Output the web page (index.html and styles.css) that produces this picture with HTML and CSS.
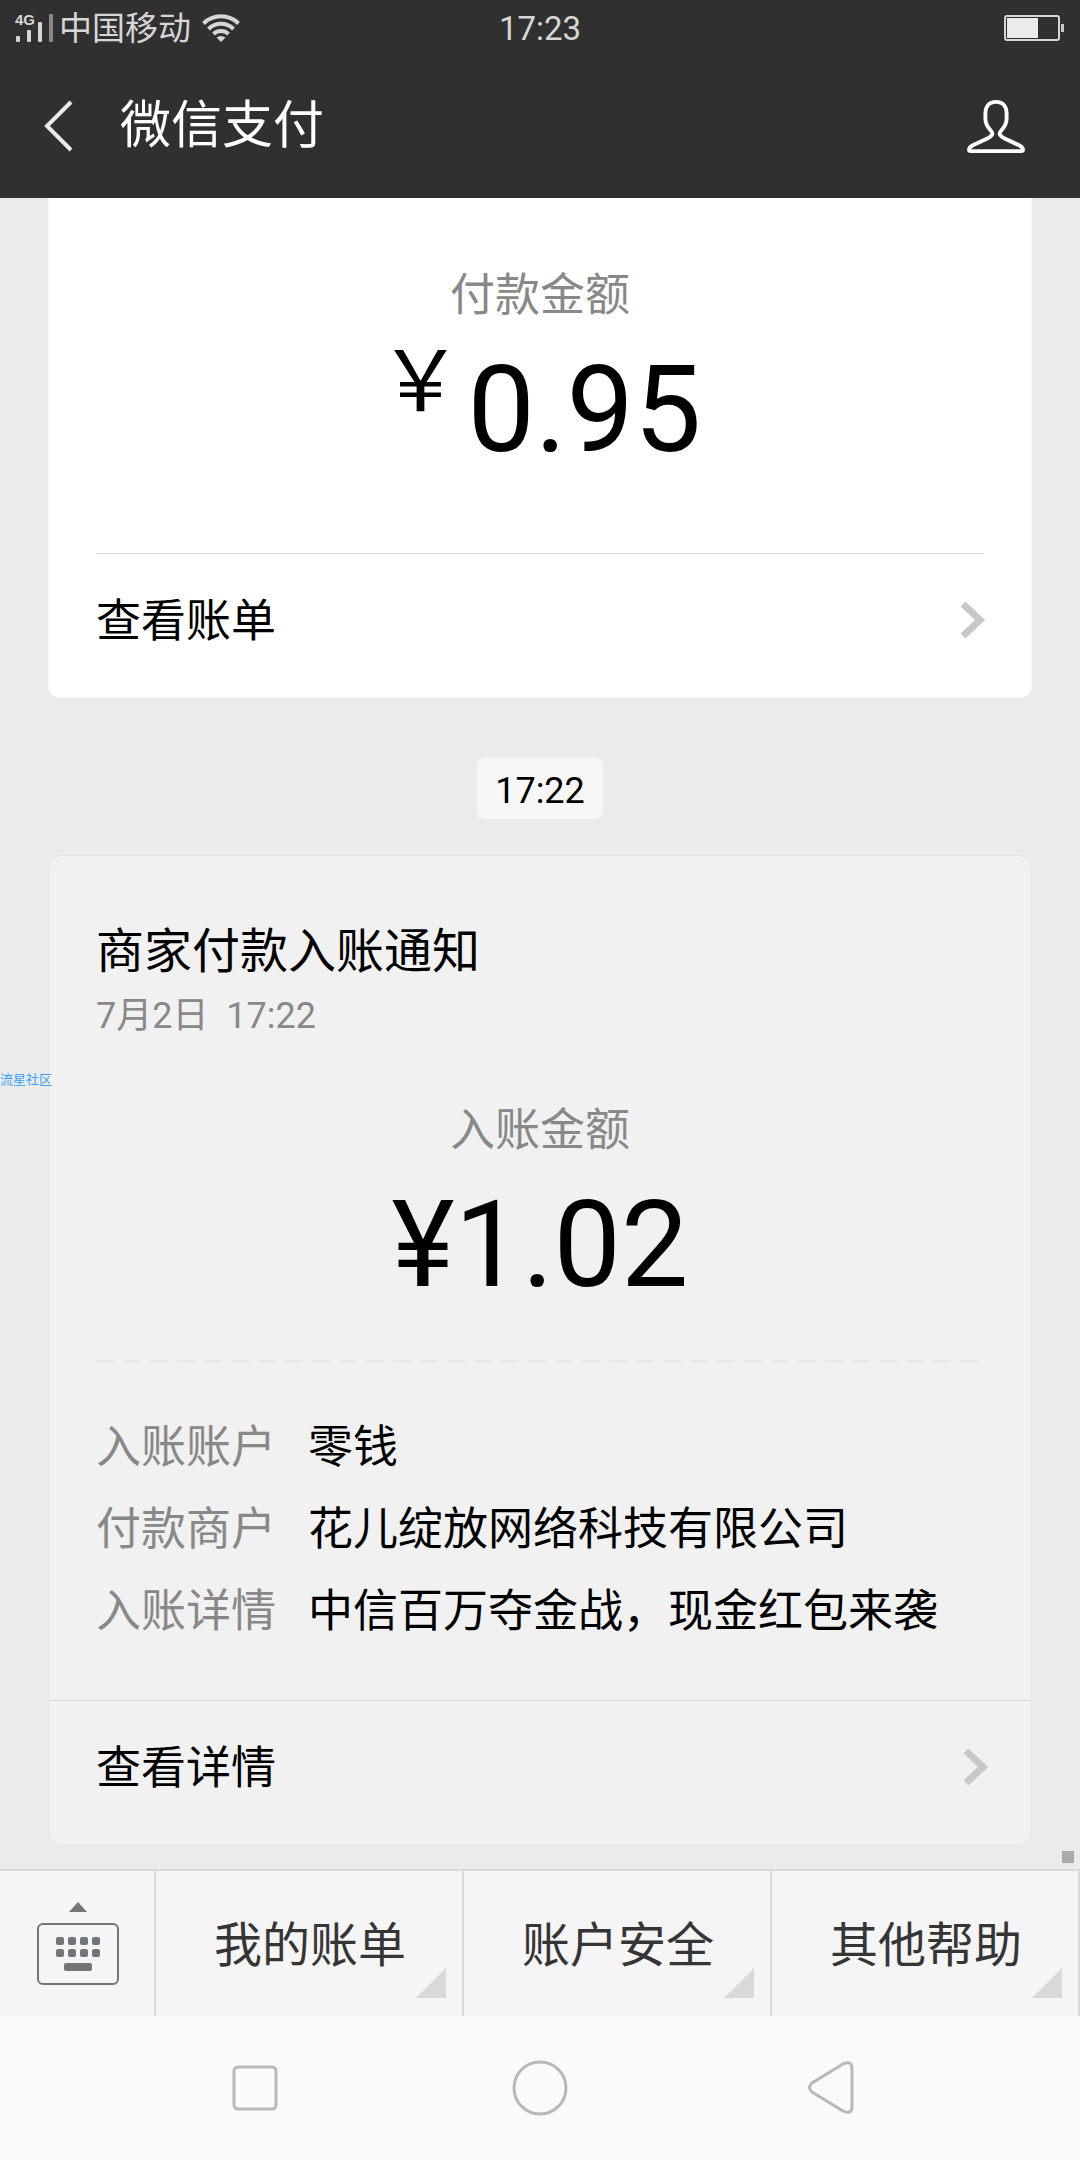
FILE: index.html
```html
<!DOCTYPE html>
<html lang="zh-CN">
<head>
<meta charset="utf-8">
<meta name="viewport" content="width=device-width, initial-scale=1">
<title>微信支付</title>
<link rel="stylesheet" href="styles.css">
</head>
<body>
<header class="top">
  <div class="status">
    <div class="status-left">
      <svg class="signal" width="40" height="30" viewBox="0 0 40 30" aria-hidden="true">
        <text class="signal-label" x="0" y="12">4G</text>
        <rect x="1" y="23" width="4" height="6" rx="1"/>
        <rect x="12" y="17" width="4" height="12" rx="1"/>
        <rect x="23" y="9" width="4" height="20" rx="1"/>
        <rect class="signal-off" x="34" y="1" width="4" height="28" rx="1"/>
      </svg>
      <span class="carrier">中国移动</span>
      <svg class="wifi" width="38" height="28" viewBox="0 0 38 28" aria-hidden="true">
        <path d="M1.500 9.500A25 25 0 0 1 36.500 9.500M6.500 15A17.500 17.500 0 0 1 31.500 15M11.500 20A11 11 0 0 1 26.500 20"/>
        <path class="wifi-dot" d="M14.500 23.500Q19 20.500 23.500 23.500L19 28Z"/>
      </svg>
    </div>
    <time class="clock">17:23</time>
    <svg class="battery" width="61" height="26" viewBox="0 0 61 26" aria-hidden="true">
      <rect class="battery-case" x="1" y="1" width="54" height="24" rx="2"/>
      <rect class="battery-level" x="3" y="3" width="31" height="20"/>
      <rect class="battery-nub" x="57" y="9" width="3" height="8"/>
    </svg>
  </div>
  <div class="title-bar">
    <button class="icon-button" type="button" aria-label="返回">
      <svg width="30" height="52" viewBox="0 0 30 52"><path class="back" d="M28 2L4 26L28 50"/></svg>
    </button>
    <h1 class="title">微信支付</h1>
    <button class="icon-button" type="button" aria-label="账号">
      <svg width="58" height="54" viewBox="0 0 60 56"><path class="person" d="M30 3C22 3 19 9 19 14V20C19 32 28 32 26 37C25 39 23 40 21 41L6 48Q2 50 2 53Q2 54 4 54H56Q58 54 58 53Q58 50 54 48L39 41C37 40 35 39 34 37C32 32 41 32 41 20V14C41 9 38 3 30 3Z"/></svg>
    </button>
  </div>
</header>

<main class="chat">
  <article class="card card-first">
    <p class="amount-label">付款金额</p>
    <p class="amount"><span class="amount-sign">￥</span>0.95</p>
    <a class="card-link card-link-inset" href="#bill">
      <span class="card-link-text">查看账单</span>
      <svg class="chevron" width="24" height="38" viewBox="0 0 24 38" aria-hidden="true"><path d="M3 3L20 19L3 35"/></svg>
    </a>
  </article>

  <time class="stamp">17:22</time>

  <article class="card card-notice">
    <h2 class="card-title">商家付款入账通知</h2>
    <p class="card-date">7月2日&nbsp; 17:22</p>
    <p class="amount-label">入账金额</p>
    <p class="amount">¥1.02</p>
    <div class="dashes"></div>
    <dl class="details">
      <dt>入账账户</dt><dd>零钱</dd>
      <dt>付款商户</dt><dd>花儿绽放网络科技有限公司</dd>
      <dt>入账详情</dt><dd>中信百万夺金战，现金红包来袭</dd>
    </dl>
    <a class="card-link" href="#detail">
      <span class="card-link-text">查看详情</span>
      <svg class="chevron" width="24" height="38" viewBox="0 0 24 38" aria-hidden="true"><path d="M3 3L20 19L3 35"/></svg>
    </a>
    <span class="watermark">流星社区</span>
  </article>
  <span class="marker"></span>
</main>

<nav class="menu">
  <button class="menu-item menu-keyboard" type="button" aria-label="键盘">
    <svg width="82" height="83" viewBox="0 0 82 83">
      <path class="key" d="M41 0L50 10H32Z"/>
      <rect class="key-frame" x="1" y="22" width="80" height="60" rx="5"/>
      <g class="key">
        <rect x="19" y="35" width="8" height="8" rx="2"/><rect x="31" y="35" width="8" height="8" rx="2"/><rect x="43" y="35" width="8" height="8" rx="2"/><rect x="55" y="35" width="8" height="8" rx="2"/>
        <rect x="19" y="47" width="8" height="8" rx="2"/><rect x="31" y="47" width="8" height="8" rx="2"/><rect x="43" y="47" width="8" height="8" rx="2"/><rect x="55" y="47" width="8" height="8" rx="2"/>
        <rect x="27" y="61" width="28" height="8" rx="2"/>
      </g>
    </svg>
  </button>
  <button class="menu-item menu-more" type="button">我的账单</button>
  <button class="menu-item menu-more" type="button">账户安全</button>
  <button class="menu-item menu-more" type="button">其他帮助</button>
</nav>

<footer class="system-nav">
  <button class="system-key" type="button" aria-label="最近任务">
    <svg width="54" height="54" viewBox="0 0 54 54"><rect x="6" y="6" width="42" height="42" rx="4"/></svg>
  </button>
  <button class="system-key" type="button" aria-label="主屏幕">
    <svg width="54" height="54" viewBox="0 0 54 54"><circle cx="27" cy="27" r="26"/></svg>
  </button>
  <button class="system-key" type="button" aria-label="返回">
    <svg width="54" height="54" viewBox="0 0 54 54"><path d="M45 3L14 22Q9 26.500 14 31L45 50Q54 54 54 46V8Q54 -1 45 3Z"/></svg>
  </button>
</footer>
</body>
</html>
```
FILE: styles.css
```css
* {
  box-sizing: border-box;
}

body {
  margin: 0;
  min-height: 100vh;
  display: flex;
  flex-direction: column;
  background: #ebebeb;
  color: #000;
  font-family: Roboto, "Noto Sans CJK SC", sans-serif;
  font-size: 45px;
}

h1, h2, p, dl, dd {
  margin: 0;
  font-weight: 400;
}

button {
  padding: 0;
  border: 0;
  background: none;
  color: inherit;
  font: inherit;
}

svg {
  display: block;
  flex: none;
  fill: none;
  overflow: visible;
}

/* Status bar and title bar */
.top {
  background: #303030;
  color: #fff;
}

.status {
  height: 56px;
  padding: 0 15px;
  display: grid;
  grid-template-columns: 1fr auto 1fr;
  align-items: center;
  color: #d6d6d6;
  font-size: 33px;
  line-height: 40px;
}

.status-left {
  display: flex;
  align-items: center;
}

.signal {
  fill: #d6d6d6;
}

.signal-label {
  font: bold 15px "Liberation Sans", sans-serif;
}

.signal-off {
  fill: #868686;
}

.carrier {
  margin: 0 11px 0 4px;
}

.carrier,
.clock {
  padding-top: 2px;
}

.wifi {
  stroke: #d6d6d6;
  stroke-width: 4;
}

.wifi-dot {
  fill: #d6d6d6;
  stroke: none;
}

.battery {
  justify-self: end;
}

.battery-case {
  stroke: #d6d6d6;
  stroke-width: 2;
}

.battery-level {
  fill: #ebebeb;
}

.battery-nub {
  fill: #c8c8c8;
}

.title-bar {
  height: 142px;
  padding: 0 55px 2px 43px;
  display: flex;
  align-items: center;
}

.icon-button {
  display: flex;
}

.title {
  flex: 1;
  margin-left: 47px;
  font-size: 51px;
  line-height: 64px;
}

.back {
  stroke: #ebebeb;
  stroke-width: 4;
}

.person {
  stroke: #fff;
  stroke-width: 4;
}

/* Message list */
.chat {
  flex: 1;
  padding: 0 48px 24px;
  position: relative;
  display: flex;
  flex-direction: column;
}

.card {
  padding-bottom: 11px;
  position: relative;
  border: 1px solid #e4e4e4;
  border-radius: 12px;
  background: #f1f1f1;
}

.card-first {
  padding-top: 66px;
  border-color: #f6f6f6;
  border-top: 0;
  border-radius: 0 0 12px 12px;
  background: #fff;
}

.amount-label {
  color: #888;
  line-height: 64px;
  text-align: center;
}

.amount {
  margin-top: 22px;
  display: flex;
  justify-content: center;
  font-size: 120px;
  line-height: 120px;
}

.amount-sign {
  margin-right: 5px;
  font-family: "Noto Sans CJK SC", sans-serif;
  font-size: 84px;
  line-height: 50px;
}

.card-link {
  height: 133px;
  padding: 0 44px 0 47px;
  display: flex;
  align-items: center;
  justify-content: space-between;
  border-top: 1px solid #d9d9d9;
  color: #000;
  text-decoration: none;
}

.card-link-inset {
  margin: 83px 47px 0;
  padding: 0;
}

.card-link-text {
  padding-bottom: 6px;
}

.chevron {
  stroke: #c7c7cc;
  stroke-width: 7;
}

.stamp {
  margin: 60px 0 36px;
  padding: 6px 18px 0;
  align-self: center;
  border-radius: 6px;
  background: #f7f7f7;
  font-size: 36px;
  line-height: 55px;
}

.card-title {
  margin: 66px 47px 0;
  font-size: 48px;
  line-height: 60px;
}

.card-date {
  margin: 10px 47px 59px;
  color: #888;
  font-size: 36px;
  line-height: 48px;
}

.dashes {
  height: 2px;
  margin: 55px 47px 45px;
  background: repeating-linear-gradient(90deg, #e7e7e7 0 18px, transparent 18px 27px);
}

.details {
  margin: 0 47px 47px;
  display: grid;
  grid-template-columns: max-content 1fr;
  column-gap: 32px;
  line-height: 82px;
}

.details dt {
  color: #888;
}

.watermark {
  position: absolute;
  left: -49px;
  top: 216px;
  color: #3ba3f4;
  font-size: 13px;
  line-height: 16px;
}

.marker {
  width: 12px;
  height: 12px;
  position: absolute;
  right: 6px;
  bottom: 6px;
  background: #aaa;
}

/* Bottom menu */
.menu {
  display: grid;
  grid-template-columns: 156px 1fr 1fr 1fr;
  border-top: 2px solid #d9d9d9;
  background: #f5f5f5;
  color: #353535;
  font-size: 48px;
}

.menu-item {
  height: 145px;
  padding-left: 2px;
  position: relative;
  display: flex;
  align-items: center;
  justify-content: center;
  border-right: 2px solid #d9d9d9;
}

.menu-more {
  padding-bottom: 5px;
}

.menu-more::after {
  content: "";
  width: 30px;
  height: 30px;
  position: absolute;
  right: 16px;
  bottom: 18px;
  background: #d9d9d9;
  clip-path: polygon(100% 0, 100% 100%, 0 100%);
}

.key {
  fill: #71767b;
}

.key-frame {
  stroke: #71767b;
  stroke-width: 2;
}

/* System navigation keys */
.system-nav {
  height: 144px;
  padding: 0 112px;
  display: grid;
  grid-template-columns: 1fr 1fr 1fr;
  background: #fafafa;
}

.system-key {
  display: flex;
  align-items: center;
  justify-content: center;
}

.system-key svg {
  stroke: #b8b8b8;
  stroke-width: 3;
}
```
